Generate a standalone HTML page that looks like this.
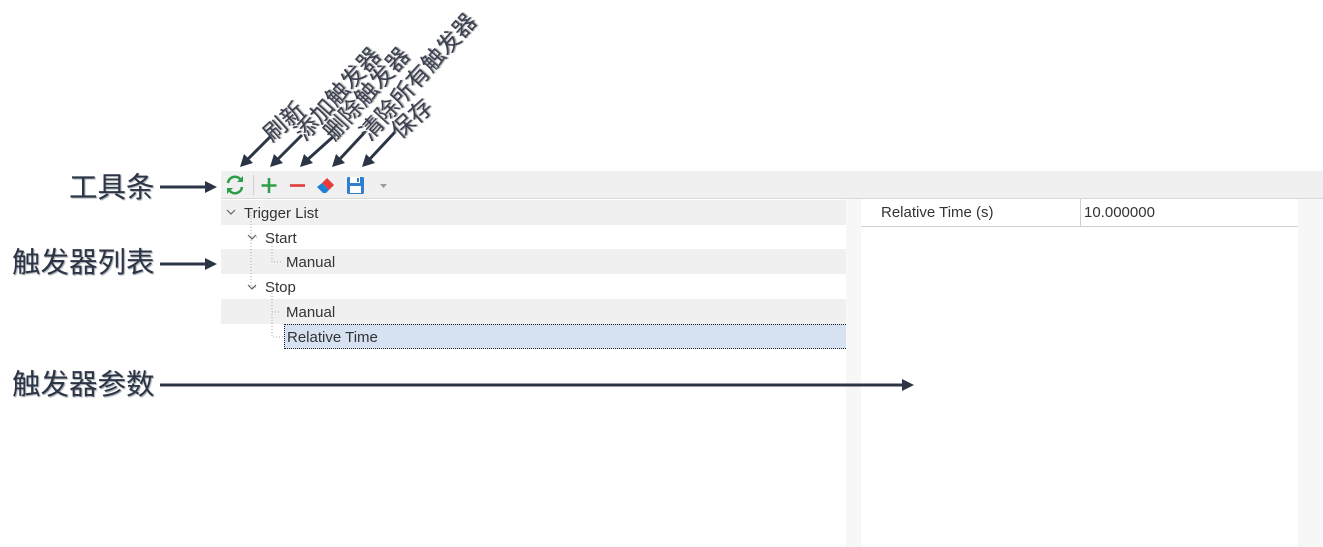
<!DOCTYPE html>
<html><head><meta charset="utf-8"><style>
body{margin:0;width:1323px;height:547px;background:#fff;position:relative;overflow:hidden;font-family:"Segoe UI","Liberation Sans","Noto Sans CJK SC",sans-serif;}
.a{position:absolute}
.row{position:absolute;left:221px;width:625px;height:25px;font-size:15px;color:#333;line-height:27px}
.g{background:#f0f0f0}
.lbl{position:absolute;font-family:"Liberation Sans","Noto Sans CJK SC",sans-serif;font-size:28.5px;color:#2c3545;text-shadow:1px 1px 1px #a0a4ac;line-height:30px}
</style></head><body>
<div class="a" style="left:221px;top:171px;width:1102px;height:27px;background:#f0f0f0;border-bottom:1px solid #d8d8d8"></div>
<div class="a" style="left:253px;top:175px;width:1px;height:20px;background:#d0d0d0"></div>
<div class="row g" style="top:200px"><span style="position:absolute;left:23px">Trigger List</span></div>
<div class="row" style="top:225px"><span style="position:absolute;left:44px">Start</span></div>
<div class="row g" style="top:249px"><span style="position:absolute;left:65px">Manual</span></div>
<div class="row" style="top:274px"><span style="position:absolute;left:44px">Stop</span></div>
<div class="row g" style="top:299px"><span style="position:absolute;left:65px">Manual</span></div>
<div class="a" style="left:284px;top:324px;width:560px;height:23px;background:#d6e2f2;border:1px dotted #222;font-size:15px;line-height:25px;color:#333;padding-left:2px">Relative Time</div>
<div class="a" style="left:846px;top:199px;width:15px;height:348px;background:#f7f7f7"></div>
<div class="a" style="left:1298px;top:199px;width:25px;height:348px;background:#f7f7f7"></div>
<div class="a" style="left:861px;top:226px;width:437px;height:1px;background:#d0d0d0"></div>
<div class="a" style="left:1080px;top:199px;width:1px;height:27px;background:#d0d0d0"></div>
<div class="a" style="left:881px;top:204px;font-size:15px;color:#333">Relative Time (s)</div>
<div class="a" style="left:1084px;top:204px;font-size:15px;color:#333">10.000000</div>
<div class="lbl" style="left:69px;top:173px">工具条</div>
<div class="lbl" style="left:12px;top:248px">触发器列表</div>
<div class="lbl" style="left:12px;top:370px">触发器参数</div>
<svg class="a" style="left:0;top:0" width="1323" height="547">
<g stroke="#aaa" fill="none" stroke-dasharray="1,2">
<path d="M251 212V237H258M272 237V262H281M251 237V287H258M272 287V337H284M272 312H281"/>
</g>
<g stroke="#666" fill="none" stroke-width="1.2">
<path d="M227 210l4 4 4-4M248 235l4 4 4-4M248 285l4 4 4-4"/>
</g>
<g stroke="#2c3545" stroke-width="3" fill="#2c3545">
<line x1="160" y1="187" x2="206" y2="187"/><path d="M217 187l-12-6v12z" stroke="none"/>
<line x1="160" y1="264" x2="206" y2="264"/><path d="M217 264l-12-6v12z" stroke="none"/>
<line x1="160" y1="385" x2="903" y2="385"/><path d="M914 385l-12-6v12z" stroke="none"/>
<line x1="272" y1="135" x2="246" y2="161"/><path d="M240 167l4-13 9 9z" stroke="none"/>
<line x1="302" y1="135" x2="276" y2="161"/><path d="M270 167l4-13 9 9z" stroke="none"/>
<line x1="335" y1="135" x2="306" y2="161"/><path d="M300 167l4-13 9 9z" stroke="none"/>
<line x1="365" y1="132" x2="338" y2="161"/><path d="M332 167l4-13 9 9z" stroke="none"/>
<line x1="395" y1="132" x2="368" y2="161"/><path d="M362 167l4-13 9 9z" stroke="none"/>
</g>
<g font-family="Liberation Sans,Noto Sans CJK SC,sans-serif" font-size="23" fill="#3a4050" style="text-shadow:1px 1px 1px #999">
<text transform="translate(272 143) rotate(-42)">刷新</text>
<text transform="translate(305 142) rotate(-48)">添加触发器</text>
<text transform="translate(334 142) rotate(-48)">删除触发器</text>
<text transform="translate(370 142) rotate(-48)">清除所有触发器</text>
<text transform="translate(400 140) rotate(-42)">保存</text>
</g>
<g fill="none" stroke="#2e9e4a" stroke-width="2.6">
<path d="M228 183a7 7 0 0 1 12.5-3.5"/><path d="M242 187a7 7 0 0 1-12.5 3.5"/>
</g>
<path d="M243 176v6h-6z" fill="#2e9e4a"/><path d="M227 194v-6h6z" fill="#2e9e4a"/>
<path d="M269 178v15M261.5 185.5h15" stroke="#2e9e4a" stroke-width="2.6"/>
<path d="M290 185.5h15" stroke="#e03a3a" stroke-width="2.6"/>
<path d="M327 178l7 7-5 5-7-7z" fill="#e83a3a"/><path d="M322 183l7 7-3 3h-3l-6-6z" fill="#1e7fd6"/>
<rect x="347" y="177" width="17" height="17" rx="1.5" fill="#2f7fd0"/><rect x="350" y="177" width="10" height="6" fill="#fff"/><rect x="350" y="186" width="11" height="7" fill="#fff"/><rect x="357" y="178" width="2" height="4" fill="#2f7fd0"/>
<path d="M380 184h7l-3.5 4z" fill="#999"/>
</svg>
</body></html>
